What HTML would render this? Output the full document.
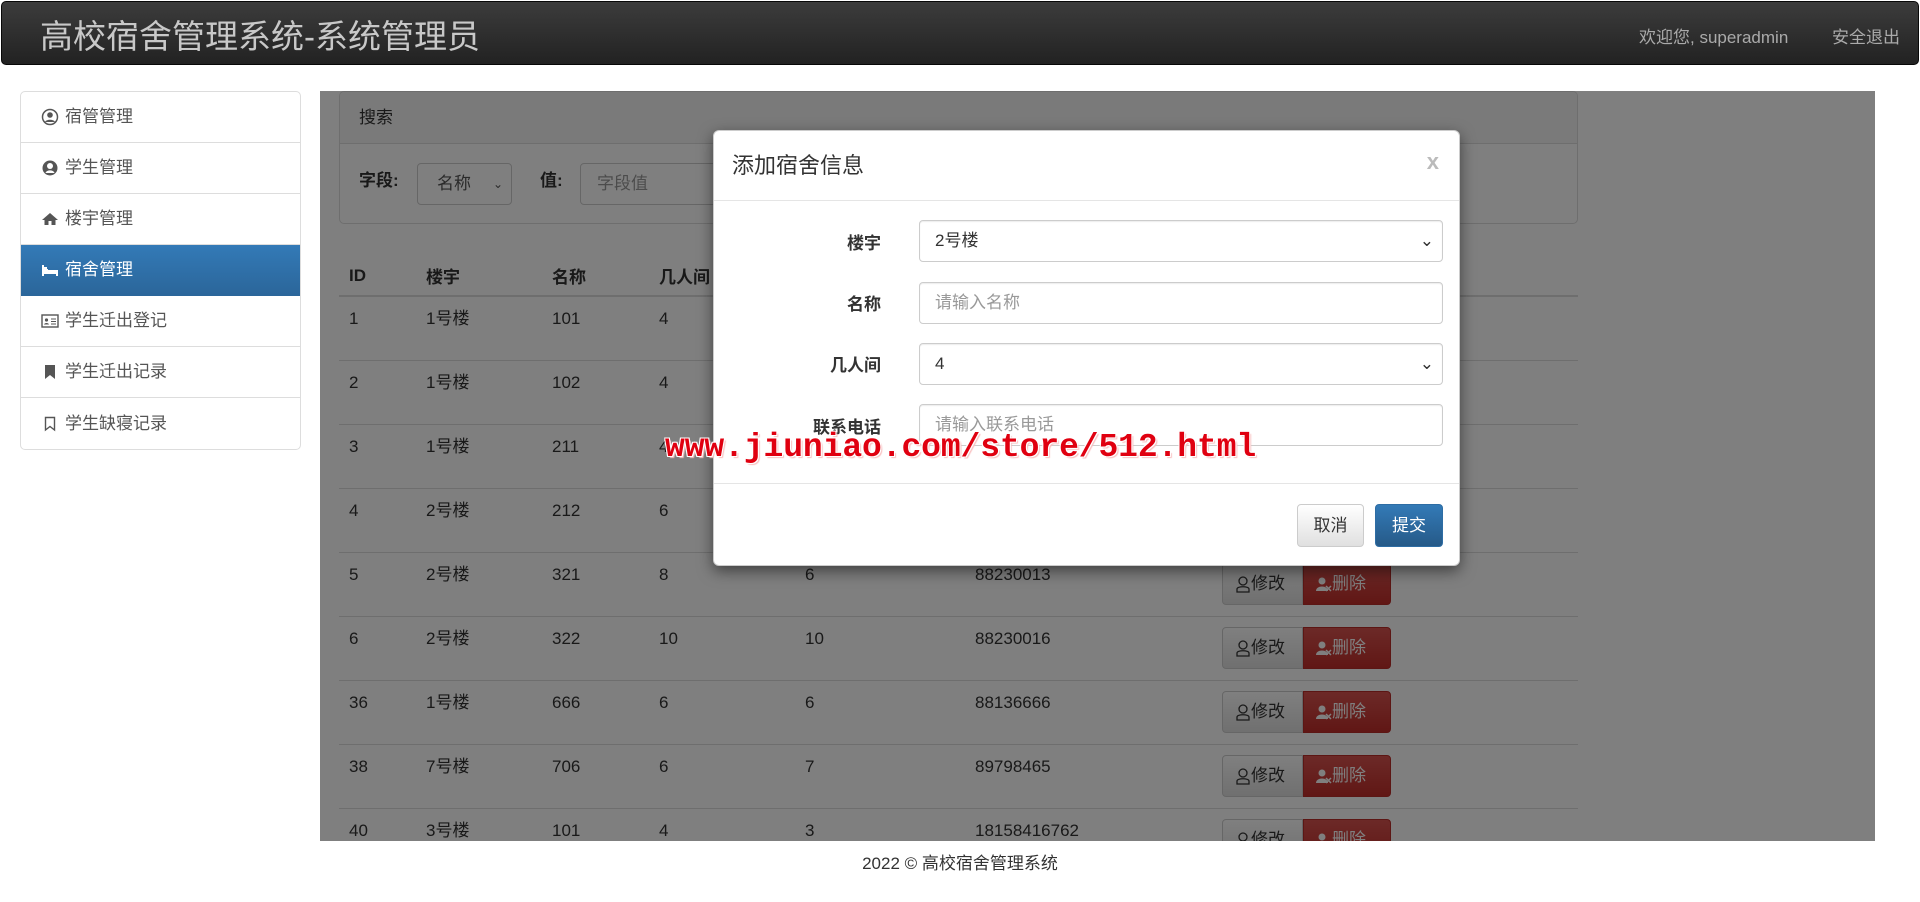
<!DOCTYPE html>
<html><head><meta charset="utf-8"><style>
*{box-sizing:border-box;margin:0;padding:0}
body{width:1920px;height:902px;overflow:hidden;background:#fff;font-family:"Liberation Sans","Noto Sans CJK SC",sans-serif;font-size:17px;color:#333;position:relative}
.hdr{position:absolute;left:1px;top:1px;width:1918px;height:64px;border-radius:5px;background:linear-gradient(#3c3c3c,#222);border:1px solid #080808}
.hdr .t{position:absolute;left:38px;top:8px;font-size:33px;color:#c8c8c8}
.hdr .r{position:absolute;top:21px;font-size:17px;color:#aaa}
.side{position:absolute;left:20px;top:91px;width:281px;border:1px solid #ddd;border-radius:5px;overflow:hidden}
.side div{height:51px;border-bottom:1px solid #ddd;padding-left:20px;line-height:50px;font-size:17px;color:#555;display:flex;align-items:center;gap:6px}
.side div:last-child{border-bottom:none}
.side .act{background:linear-gradient(#337ab7,#2b669a);color:#fff;border-color:#2b669a}
.side svg{width:18px;height:18px;flex:none}
.main{position:absolute;left:320px;top:91px;width:1555px;height:750px;overflow:hidden;background:#fff}
.panel{position:absolute;left:19px;top:0;width:1239px;height:133px;border:1px solid #ddd;border-radius:5px;overflow:hidden}
.ph{height:52px;background:#f5f5f5;border-bottom:1px solid #ddd;padding-left:19px;line-height:52px}
.pb{position:relative;height:80px}
.lbl{position:absolute;font-weight:bold;top:27px}
.sel{position:absolute;border:1px solid #ccc;border-radius:4px;background:#fff;color:#999}
table{position:absolute;left:19px;top:165px;width:1239px;border-collapse:collapse}
th{text-align:left;font-weight:bold;height:40px;padding-left:10px;border-bottom:2px solid #ddd;vertical-align:middle}
td{height:64px;padding-left:10px;border-top:1px solid #ddd;vertical-align:top;padding-top:12px;line-height:20px}
.bt{display:inline-flex;height:42px;margin-top:-2px}
.bt span{display:flex;align-items:center;padding:0 12px;font-size:17px;line-height:20px}
.b1{background:linear-gradient(#fff,#e0e0e0);border:1px solid #ccc;border-radius:4px 0 0 4px;color:#333;width:81px}
.b2{background:linear-gradient(#d9534f,#c12e2a);border:1px solid #b92c28;border-radius:0 4px 4px 0;color:#fff;width:88px}
.b1 svg,.b2 svg{width:16px;height:18px;flex:none}
.ov{position:absolute;left:0;top:0;width:100%;height:100%;background:rgba(0,0,0,.5)}
.modal{position:absolute;left:713px;top:130px;width:747px;height:436px;background:#fff;border-radius:6px;box-shadow:0 5px 15px rgba(0,0,0,.5);border:1px solid rgba(0,0,0,.2)}
.mh{height:70px;border-bottom:1px solid #e5e5e5;padding:17px 0 0 18px;font-size:22px;color:#333}
.mx{position:absolute;right:20px;top:18px;font-size:22px;font-weight:bold;color:#bbb}
.fl{position:absolute;right:578px;font-weight:bold;font-size:17px}
.fi{position:absolute;left:205px;width:524px;height:42px;border:1px solid #ccc;border-radius:4px;padding-left:15px;line-height:40px;font-size:17px;box-shadow:inset 0 1px 1px rgba(0,0,0,.075)}
.fi.ph2{color:#999}
.chev{position:absolute;right:8px;top:0}
.mf{position:absolute;left:0;top:352px;width:100%;border-top:1px solid #e5e5e5}
.wm{position:absolute;left:665px;top:429px;font-family:"Liberation Mono",monospace;font-weight:bold;font-size:33px;color:#e00010;letter-spacing:-0.1px;text-shadow:1px 1px 0 #fff,-1px -1px 0 #fff,1px -1px 0 #fff,-1px 1px 0 #fff,2px 2px 1px #f8c0c0;white-space:nowrap}
.foot{position:absolute;top:849px;left:0;width:1920px;text-align:center;font-size:17px;color:#333}
</style></head><body>
<div class="hdr"><div class="t">高校宿舍管理系统-系统管理员</div><div class="r" style="left:1637px">欢迎您, superadmin</div><div class="r" style="left:1830px">安全退出</div></div>
<div class="side">
<div><svg viewBox="0 0 18 18"><circle cx="9" cy="9" r="7.5" fill="none" stroke="#555" stroke-width="1.5"/><circle cx="9" cy="7" r="2.8" fill="#555"/><path d="M4 14c1-3 9-3 10 0" fill="#555"/></svg>宿管管理</div>
<div><svg viewBox="0 0 18 18"><circle cx="9" cy="9" r="7.5" fill="#555"/><circle cx="9" cy="7" r="3" fill="#fff"/><path d="M4.5 14c1-3.5 8-3.5 9 0" fill="#fff"/></svg>学生管理</div>
<div><svg viewBox="0 0 18 18"><path d="M9 3L1 10h2.5v5h4v-4h3v4h4v-5H17z" fill="#555"/></svg>楼宇管理</div>
<div class="act"><svg viewBox="0 0 18 18"><path d="M1 4v11h2v-2h12v2h2V9H7V8H3V4z" fill="#fff"/><rect x="3" y="6" width="3" height="2" fill="#fff"/></svg>宿舍管理</div>
<div><svg viewBox="0 0 18 18"><rect x="1" y="3" width="16" height="12" fill="none" stroke="#555" stroke-width="1.4"/><circle cx="5.5" cy="8" r="1.6" fill="#555"/><path d="M3 12.5c.5-2 4.5-2 5 0z" fill="#555"/><path d="M10 7h5M10 9.5h5M10 12h5" stroke="#555"/></svg>学生迁出登记</div>
<div><svg viewBox="0 0 18 18"><path d="M4 2h10v14l-5-4-5 4z" fill="#555"/></svg>学生迁出记录</div>
<div><svg viewBox="0 0 18 18"><path d="M4.5 2.5h9v12.5l-4.5-3.5-4.5 3.5z" fill="none" stroke="#555" stroke-width="1.4"/></svg>学生缺寝记录</div>
</div>
<div class="main">
<div class="panel"><div class="ph">搜索</div><div class="pb">
<span class="lbl" style="left:19px;top:22px">字段:</span>
<div class="sel" style="left:77px;top:19px;width:95px;height:42px;line-height:40px;padding-left:19px;color:#555">名称 <span style="position:absolute;right:8px;font-size:12px">⌄</span></div>
<span class="lbl" style="left:200px;top:22px">值:</span>
<div class="sel" style="left:240px;top:19px;width:500px;height:42px;line-height:40px;padding-left:16px">字段值</div>
</div></div>
<table>
<tr><th style="width:77px">ID</th><th style="width:126px">楼宇</th><th style="width:107px">名称</th><th style="width:146px">几人间</th><th style="width:170px">入住人数</th><th style="width:247px">联系电话</th><th>操作</th></tr>
<tr><td>1</td><td>1号楼</td><td>101</td><td>4</td><td>4</td><td>88230011</td><td></td></tr>
<tr><td>2</td><td>1号楼</td><td>102</td><td>4</td><td>4</td><td>88230012</td><td></td></tr>
<tr><td>3</td><td>1号楼</td><td>211</td><td>4</td><td>4</td><td>88230014</td><td></td></tr>
<tr><td>4</td><td>2号楼</td><td>212</td><td>6</td><td>6</td><td>88230015</td><td></td></tr>
<tr><td>5</td><td>2号楼</td><td>321</td><td>8</td><td>6</td><td>88230013</td><td><div class="bt"><span class="b1"><svg viewBox="0 0 16 18"><circle cx="8" cy="6" r="4" fill="none" stroke="#333" stroke-width="1.3"/><path d="M2 17v-3c0-3 12-3 12 0v3z" fill="none" stroke="#333" stroke-width="1.3"/></svg>修改</span><span class="b2"><svg viewBox="0 0 16 18"><circle cx="6" cy="6" r="3.5" fill="#fff"/><path d="M0 16c0-6 12-6 12 0z" fill="#fff"/><path d="M10 11l5 5M15 11l-5 5" stroke="#fff" stroke-width="1.5"/></svg>删除</span></div></td></tr>
<tr><td>6</td><td>2号楼</td><td>322</td><td>10</td><td>10</td><td>88230016</td><td><div class="bt"><span class="b1"><svg viewBox="0 0 16 18"><circle cx="8" cy="6" r="4" fill="none" stroke="#333" stroke-width="1.3"/><path d="M2 17v-3c0-3 12-3 12 0v3z" fill="none" stroke="#333" stroke-width="1.3"/></svg>修改</span><span class="b2"><svg viewBox="0 0 16 18"><circle cx="6" cy="6" r="3.5" fill="#fff"/><path d="M0 16c0-6 12-6 12 0z" fill="#fff"/><path d="M10 11l5 5M15 11l-5 5" stroke="#fff" stroke-width="1.5"/></svg>删除</span></div></td></tr>
<tr><td>36</td><td>1号楼</td><td>666</td><td>6</td><td>6</td><td>88136666</td><td><div class="bt"><span class="b1"><svg viewBox="0 0 16 18"><circle cx="8" cy="6" r="4" fill="none" stroke="#333" stroke-width="1.3"/><path d="M2 17v-3c0-3 12-3 12 0v3z" fill="none" stroke="#333" stroke-width="1.3"/></svg>修改</span><span class="b2"><svg viewBox="0 0 16 18"><circle cx="6" cy="6" r="3.5" fill="#fff"/><path d="M0 16c0-6 12-6 12 0z" fill="#fff"/><path d="M10 11l5 5M15 11l-5 5" stroke="#fff" stroke-width="1.5"/></svg>删除</span></div></td></tr>
<tr><td>38</td><td>7号楼</td><td>706</td><td>6</td><td>7</td><td>89798465</td><td><div class="bt"><span class="b1"><svg viewBox="0 0 16 18"><circle cx="8" cy="6" r="4" fill="none" stroke="#333" stroke-width="1.3"/><path d="M2 17v-3c0-3 12-3 12 0v3z" fill="none" stroke="#333" stroke-width="1.3"/></svg>修改</span><span class="b2"><svg viewBox="0 0 16 18"><circle cx="6" cy="6" r="3.5" fill="#fff"/><path d="M0 16c0-6 12-6 12 0z" fill="#fff"/><path d="M10 11l5 5M15 11l-5 5" stroke="#fff" stroke-width="1.5"/></svg>删除</span></div></td></tr>
<tr><td>40</td><td>3号楼</td><td>101</td><td>4</td><td>3</td><td>18158416762</td><td><div class="bt"><span class="b1"><svg viewBox="0 0 16 18"><circle cx="8" cy="6" r="4" fill="none" stroke="#333" stroke-width="1.3"/><path d="M2 17v-3c0-3 12-3 12 0v3z" fill="none" stroke="#333" stroke-width="1.3"/></svg>修改</span><span class="b2"><svg viewBox="0 0 16 18"><circle cx="6" cy="6" r="3.5" fill="#fff"/><path d="M0 16c0-6 12-6 12 0z" fill="#fff"/><path d="M10 11l5 5M15 11l-5 5" stroke="#fff" stroke-width="1.5"/></svg>删除</span></div></td></tr>
</table>
<div class="ov"></div>
</div>
<div class="modal">
<div class="mh">添加宿舍信息</div><div class="mx">x</div>
<span class="fl" style="top:98px">楼宇</span><div class="fi" style="top:89px">2号楼<span class="chev">⌄</span></div>
<span class="fl" style="top:159px">名称</span><div class="fi ph2" style="top:151px">请输入名称</div>
<span class="fl" style="top:220px">几人间</span><div class="fi" style="top:212px">4<span class="chev">⌄</span></div>
<span class="fl" style="top:282px">联系电话</span><div class="fi ph2" style="top:273px">请输入联系电话</div>
<div class="mf"></div>
<div style="position:absolute;left:583px;top:373px;width:67px;height:43px;border:1px solid #ccc;border-radius:4px;background:linear-gradient(#fff,#e0e0e0);text-align:center;line-height:41px">取消</div>
<div style="position:absolute;left:661px;top:373px;width:68px;height:43px;border:1px solid #2e6da4;border-radius:4px;background:linear-gradient(#337ab7,#265a88);color:#fff;text-align:center;line-height:41px">提交</div>
</div>
<div class="wm">www.jiuniao.com/store/512.html</div>
<div class="foot">2022 © 高校宿舍管理系统</div>
</body></html>
